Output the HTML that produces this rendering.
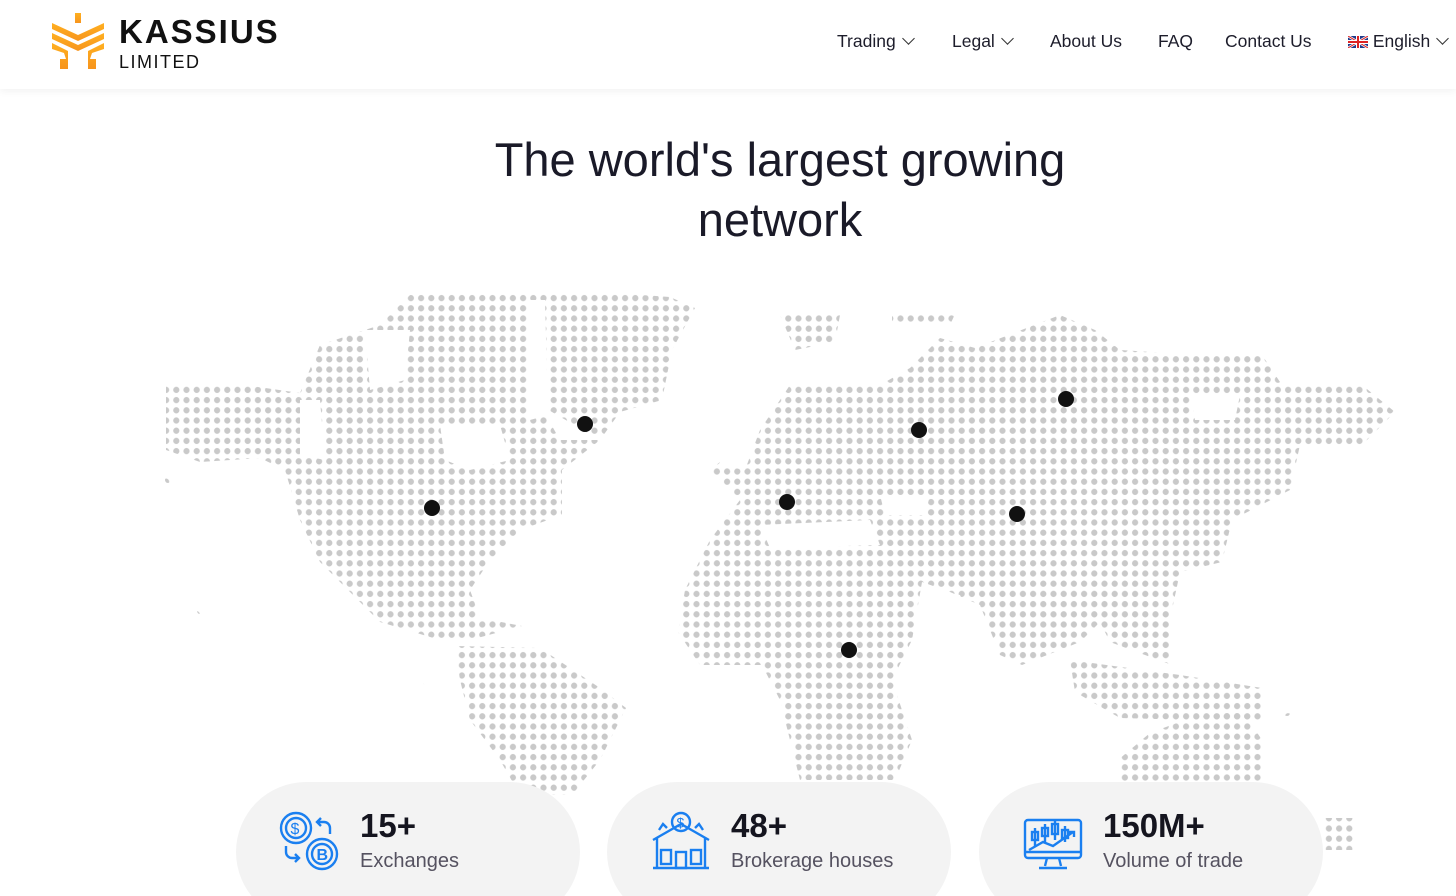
<!DOCTYPE html>
<html style="overflow:hidden"><head><meta charset="utf-8"><style>
html,body{margin:0;width:1456px;height:896px;overflow:hidden}
body{background:#fff;font-family:"Liberation Sans",sans-serif;position:relative}
.hdr{position:absolute;left:0;top:0;width:1456px;height:89px;background:#fff;box-shadow:0 2px 8px rgba(0,0,0,.06);z-index:2}
.nav{position:absolute;top:31px;font-size:17.5px;color:#1d1d2b;white-space:nowrap}
.chev{display:inline-block;width:8px;height:8px;border-right:1.6px solid #333;border-bottom:1.6px solid #333;transform:rotate(45deg);margin-left:8px;position:relative;top:-4px}
h1{position:absolute;left:0;width:1560px;top:130px;margin:0;text-align:center;font-weight:normal;font-size:47px;line-height:60px;color:#1a1a28}
.card{position:absolute;top:782px;width:344px;height:140px;border-radius:70px;background:#f3f3f3}
.num{position:absolute;left:124px;top:25px;font-size:33px;font-weight:bold;color:#15151f}
.lab{position:absolute;left:124px;top:68px;font-size:20px;color:#555260}
.ic{position:absolute;left:42px;top:28px}
</style></head><body>
<div class="hdr">
<svg style="position:absolute;left:50px;top:13px" width="56" height="58" viewBox="0 0 56 58">
<defs><linearGradient id="g" x1="0" y1="0" x2="0" y2="1"><stop offset="0" stop-color="#ffb020"/><stop offset="1" stop-color="#f7941d"/></linearGradient></defs>
<g fill="url(#g)"><rect x="25" y="0" width="6" height="10"/><polygon points="2,10 28,22 54,10 54,16 28,28 2,16"/><polygon points="2,20 28,32 54,20 54,26 28,38 2,26"/><polygon points="2,30 18,38 18,56 10,56 10,46 16,46 14,40 2,36"/><polygon points="54,30 38,38 38,56 46,56 46,46 40,46 42,40 54,36"/></g></svg>
<div style="position:absolute;left:119px;top:13px;font-size:33px;font-weight:bold;letter-spacing:2px;color:#111">KASSIUS</div>
<div style="position:absolute;left:119px;top:52px;font-size:18px;letter-spacing:1.5px;color:#111">LIMITED</div>
<div class="nav" style="left:837px">Trading<span class="chev"></span></div>
<div class="nav" style="left:952px">Legal<span class="chev"></span></div>
<div class="nav" style="left:1050px">About Us</div>
<div class="nav" style="left:1158px">FAQ</div>
<div class="nav" style="left:1225px">Contact Us</div>
<div class="nav" style="left:1348px"><svg width="20" height="12" style="vertical-align:-1px"><rect width="20" height="12" fill="#1f3a8a"/><path d="M0 0L20 12M20 0L0 12" stroke="#fff" stroke-width="2.5"/><path d="M0 0L20 12M20 0L0 12" stroke="#d22" stroke-width="1"/><path d="M10 0V12M0 6H20" stroke="#fff" stroke-width="4"/><path d="M10 0V12M0 6H20" stroke="#d22" stroke-width="2"/></svg> English<span class="chev"></span></div>
</div>
<h1>The world's largest growing<br>network</h1>
<svg style="position:absolute;left:0;top:0" width="1456" height="896">
<defs><pattern id="p" x="161" y="293" width="10.2" height="10.2" patternUnits="userSpaceOnUse"><circle cx="5.1" cy="5.1" r="3.1" fill="#c9c9c9"/></pattern></defs>
<g fill="url(#p)">
<polygon points="166,385 230,383 300,393 320,345 380,325 410,295 520,292 600,292 670,297 695,308 672,350 662,400 620,412 600,440 562,470 562,515 520,530 490,560 470,590 480,618 522,626 470,640 440,640 380,622 350,592 320,562 300,520 285,470 260,458 200,462 166,450"/>
<polygon points="455,646 540,648 600,688 626,708 600,760 572,795 520,795 500,760 470,720 460,680"/>
<polygon points="780,315 840,315 835,342 795,350"/>
<polygon points="892,314 955,314 950,325 892,325"/>
<polygon points="710,470 760,430 790,385 880,385 910,368 940,338 975,348 1060,315 1095,330 1120,350 1200,355 1262,355 1282,385 1362,385 1395,412 1362,445 1300,445 1290,490 1232,520 1222,562 1180,572 1172,610 1172,665 1110,642 1100,622 1080,642 1022,665 1000,655 980,605 950,592 922,582 912,640 892,680 912,740 895,780 800,780 780,700 762,665 700,665 678,632 685,590 710,540 740,500"/>
<polygon points="1070,660 1180,675 1262,688 1262,722 1120,718 1075,692"/>
<polygon points="1118,760 1150,733 1190,718 1242,710 1262,740 1262,785 1118,785"/>
<circle cx="168" cy="480" r="3" /><circle cx="200" cy="611" r="3"/><circle cx="426" cy="682" r="3"/><circle cx="1287" cy="713" r="3"/>
<polygon points="1325,818 1355,818 1355,850 1325,850"/>
</g>
<g fill="#fff">
<polygon points="530,300 545,300 548,415 530,420"/>
<polygon points="440,425 500,425 510,460 470,470 445,460"/>
<polygon points="300,400 320,400 325,460 300,455"/>
<polygon points="365,330 410,330 405,380 370,390"/>
<polygon points="540,405 600,440 560,440"/>
<polygon points="760,525 870,520 880,545 770,548"/>
<polygon points="880,495 930,495 925,515 885,515"/>
<polygon points="930,590 960,595 990,660 975,665"/>
<polygon points="720,430 760,430 745,470 720,465"/>
<polygon points="1190,395 1240,395 1235,420 1195,420"/>
</g>
<g fill="#111"><circle cx="432" cy="508" r="8"/><circle cx="585" cy="424" r="8"/><circle cx="787" cy="502" r="8"/><circle cx="919" cy="430" r="8"/><circle cx="1066" cy="399" r="8"/><circle cx="1017" cy="514" r="8"/><circle cx="849" cy="650" r="8"/></g>
</svg>
<div class="card" style="left:236px"><svg class="ic" width="64" height="62" viewBox="0 0 64 62" fill="none" stroke="#1a7ff0" stroke-width="2.4"><circle cx="18" cy="18" r="15"/><circle cx="18" cy="18" r="10"/><text x="12.5" y="24" font-size="16" fill="#1a7ff0" stroke="none" font-family="Liberation Sans">$</text><circle cx="44" cy="44" r="15"/><circle cx="44" cy="44" r="10"/><text x="38.5" y="50" font-size="16" fill="#1a7ff0" stroke="none" font-family="Liberation Sans" font-weight="bold">B</text><path d="M52 24V18a6 6 0 0 0-6-6h-6M43 8l-4 4 4 4"/><path d="M8 36v6a6 6 0 0 0 6 6h6M17 44l4 4-4 4"/></svg><div class="num">15+</div><div class="lab">Exchanges</div></div>
<div class="card" style="left:607px"><svg class="ic" width="64" height="62" viewBox="0 0 64 62" fill="none" stroke="#1a7ff0" stroke-width="2.4"><path d="M4 30L32 14 60 30M8 28v30h48V28M4 58h56"/><rect x="12" y="40" width="10" height="14"/><rect x="27" y="42" width="10" height="16"/><rect x="42" y="40" width="10" height="14"/><circle cx="32" cy="12" r="9"/><text x="27.5" y="17.5" font-size="14" fill="#1a7ff0" stroke="none" font-family="Liberation Sans">$</text><path d="M10 20l4-6 4 4M54 20l-4-6-4 4"/></svg><div class="num">48+</div><div class="lab">Brokerage houses</div></div>
<div class="card" style="left:979px"><svg class="ic" width="64" height="62" viewBox="0 0 64 62" fill="none" stroke="#1a7ff0" stroke-width="2.4"><rect x="4" y="10" width="56" height="38" rx="3"/><path d="M4 42h56M26 48l-2 8M38 48l2 8M18 58h28"/><path d="M14 18v18M24 14v18M34 10v20M44 16v16"/><rect x="11" y="22" width="6" height="8"/><rect x="21" y="18" width="6" height="8"/><rect x="31" y="14" width="6" height="10"/><rect x="41" y="20" width="6" height="8"/><path d="M8 40l14-8 10 4 20-14M48 22h5v5"/></svg><div class="num">150M+</div><div class="lab">Volume of trade</div></div>
</body></html>
